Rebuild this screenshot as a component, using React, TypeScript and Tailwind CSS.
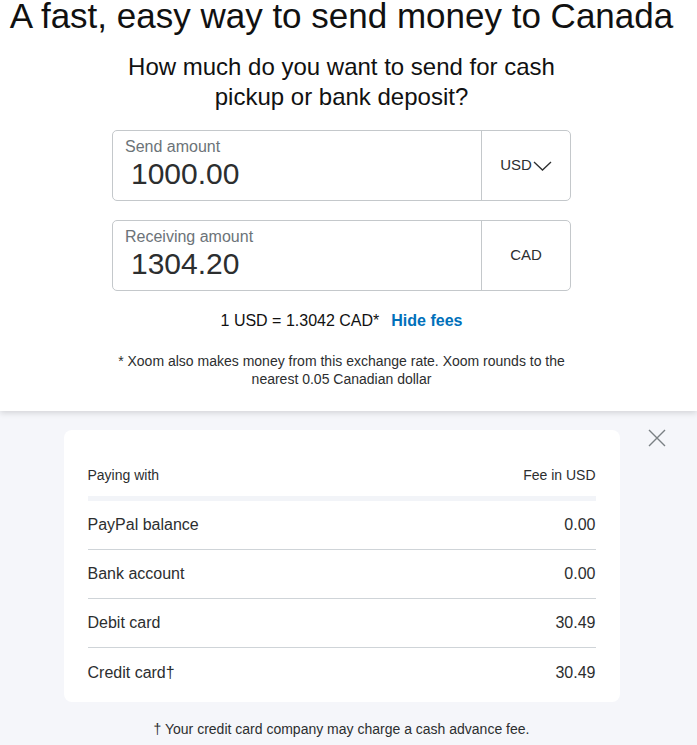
import React from 'react'

const fees = [
  { method: 'PayPal balance', fee: '0.00' },
  { method: 'Bank account', fee: '0.00' },
  { method: 'Debit card', fee: '30.49' },
  { method: 'Credit card†', fee: '30.49' },
]

const font = { fontFamily: '"Liberation Sans", Arial, sans-serif' }

function Chevron() {
  return (
    <svg width="19" height="10" viewBox="0 0 19 10" fill="none" className="ml-[1px]">
      <path d="M1 1L9.5 9L18 1" stroke="#2c2e2f" strokeWidth="1.3" />
    </svg>
  )
}

type AmountProps = {
  label: string
  value: string
  currency: string
  dropdown?: boolean
}

function AmountField({ label, value, currency, dropdown }: AmountProps) {
  return (
    <div className="flex w-[459px] h-[71px] border border-[#c4c8cb] rounded-[5px] bg-white">
      <div className="flex-1 flex flex-col pl-[12px] pt-[6px] text-left">
        <span className="text-[16px] leading-[20px] text-[#6c7378]">{label}</span>
        <span className="ml-[6px] text-[30px] leading-[34px] text-[#2c2e2f]">{value}</span>
      </div>
      <div className="w-[89px] border-l border-[#c4c8cb] flex items-center justify-center text-[15px] text-[#2c2e2f]">
        <span>{currency}</span>
        {dropdown && <Chevron />}
      </div>
    </div>
  )
}

export default function App() {
  return (
    <div className="min-h-screen bg-[#f5f6fa]" style={font}>
      <section className="relative z-10 bg-white shadow-[0_2px_6px_rgba(0,0,0,0.14)]">
        <div className="w-[683px] flex flex-col items-center pb-[23px] text-center">
          <h1 className="text-[35px] leading-[32px] font-normal text-[#111] whitespace-nowrap">
            A fast, easy way to send money to Canada
          </h1>
          <p className="mt-[20px] w-[459px] text-[24px] leading-[30px] text-[#111]">
            How much do you want to send for cash pickup or bank deposit?
          </p>
          <div className="mt-[18px]">
            <AmountField label="Send amount" value="1000.00" currency="USD" dropdown />
          </div>
          <div className="mt-[19px]">
            <AmountField label="Receiving amount" value="1304.20" currency="CAD" />
          </div>
          <p className="mt-[20px] text-[16px] leading-[20px] text-[#111]">
            1 USD = 1.3042 CAD*
            <a className="ml-[12px] font-bold text-[#0070ba] cursor-pointer">Hide fees</a>
          </p>
          <p className="mt-[21px] w-[459px] text-[14px] leading-[18px] text-[#2c2e2f]">
            * Xoom also makes money from this exchange rate. Xoom rounds to the nearest 0.05 Canadian dollar
          </p>
        </div>
      </section>

      <section className="relative w-[683px] flex flex-col items-center pt-[19px] pb-[10px]">
        <button className="absolute top-[18px] right-[17px] w-[18px] h-[18px]" aria-label="Close">
          <svg width="18" height="18" viewBox="0 0 18 18" fill="none">
            <path d="M1 1L17 17M17 1L1 17" stroke="#7a8084" strokeWidth="1.4" />
          </svg>
        </button>

        <div className="w-[556px] bg-white rounded-[8px] px-[24px] pt-[36px] pb-[5px]">
          <div className="flex justify-between text-[14px] leading-[18px] text-[#2c2e2f]">
            <span>Paying with</span>
            <span>Fee in USD</span>
          </div>
          <div className="mt-[12px] h-[5px] bg-[#f2f4f8]" />
          {fees.map((row, i) => (
            <div
              key={row.method}
              className={`flex items-center justify-between h-[49px] text-[16px] leading-[20px] text-[#2c2e2f] ${
                i < fees.length - 1 ? 'border-b border-[#cfd4d8]' : ''
              }`}
            >
              <span>{row.method}</span>
              <span>{row.fee}</span>
            </div>
          ))}
        </div>

        <p className="mt-[18px] text-[14px] leading-[18px] text-[#2c2e2f]">
          † Your credit card company may charge a cash advance fee.
        </p>
      </section>
    </div>
  )
}
